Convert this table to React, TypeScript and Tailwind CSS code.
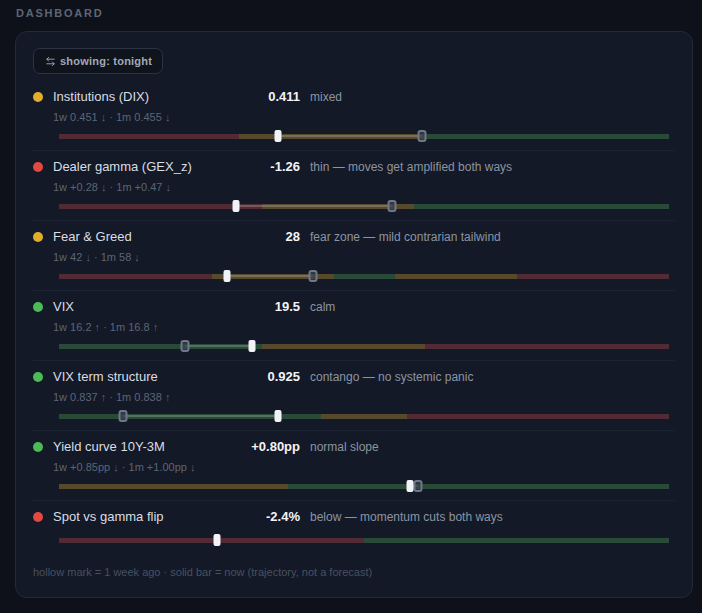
import React from 'react';
import { ArrowLeftRight } from 'lucide-react';

// --- DATA ---
type Tone = 'red' | 'amber' | 'green';

type Indicator = {
  name: string;
  tone: Tone;
  value: string;
  note: string;
  history?: string;
  // bar segments as [tone, end %]
  zones: [Tone, number][];
  now: number;
  weekAgo?: number;
};

const indicators: Indicator[] = [
  {
    name: 'Institutions (DIX)',
    tone: 'amber',
    value: '0.411',
    note: 'mixed',
    history: '1w 0.451 ↓ · 1m 0.455 ↓',
    zones: [['red', 29.5], ['amber', 60], ['green', 100]],
    now: 35.9,
    weekAgo: 59.5,
  },
  {
    name: 'Dealer gamma (GEX_z)',
    tone: 'red',
    value: '-1.26',
    note: 'thin — moves get amplified both ways',
    history: '1w +0.28 ↓ · 1m +0.47 ↓',
    zones: [['red', 33.3], ['amber', 58.2], ['green', 100]],
    now: 29,
    weekAgo: 54.6,
  },
  {
    name: 'Fear & Greed',
    tone: 'amber',
    value: '28',
    note: 'fear zone — mild contrarian tailwind',
    history: '1w 42 ↓ · 1m 58 ↓',
    zones: [['red', 25], ['amber', 45], ['green', 55], ['amber', 75], ['red', 100]],
    now: 27.6,
    weekAgo: 41.6,
  },
  {
    name: 'VIX',
    tone: 'green',
    value: '19.5',
    note: 'calm',
    history: '1w 16.2 ↑ · 1m 16.8 ↑',
    zones: [['green', 33.3], ['amber', 60], ['red', 100]],
    now: 31.6,
    weekAgo: 20.7,
  },
  {
    name: 'VIX term structure',
    tone: 'green',
    value: '0.925',
    note: 'contango — no systemic panic',
    history: '1w 0.837 ↑ · 1m 0.838 ↑',
    zones: [['green', 42.9], ['amber', 57], ['red', 100]],
    now: 35.9,
    weekAgo: 10.5,
  },
  {
    name: 'Yield curve 10Y-3M',
    tone: 'green',
    value: '+0.80pp',
    note: 'normal slope',
    history: '1w +0.85pp ↓ · 1m +1.00pp ↓',
    zones: [['amber', 37.5], ['green', 100]],
    now: 57.5,
    weekAgo: 58.9,
  },
  {
    name: 'Spot vs gamma flip',
    tone: 'red',
    value: '-2.4%',
    note: 'below — momentum cuts both ways',
    zones: [['red', 50], ['green', 100]],
    now: 25.9,
  },
];

const dotColor: Record<Tone, string> = {
  red: 'bg-[#e2493f]',
  amber: 'bg-[#e3ad2c]',
  green: 'bg-[#4cbb55]',
};

const zoneColor: Record<Tone, string> = {
  red: 'bg-[#522a33]',
  amber: 'bg-[#574a2c]',
  green: 'bg-[#284a36]',
};

// --- BAR ---
function RangeBar({ zones, now, weekAgo }: Pick<Indicator, 'zones' | 'now' | 'weekAgo'>) {
  let start = 0;
  const lo = weekAgo === undefined ? now : Math.min(now, weekAgo);
  const hi = weekAgo === undefined ? now : Math.max(now, weekAgo);

  return (
    <div className="relative ml-[26px] mr-[6px] h-[12px] flex items-center">
      <div className="flex w-full h-[5px]">
        {zones.map(([tone, end], i) => {
          const w = end - start;
          start = end;
          return <div key={i} className={`h-full ${zoneColor[tone]}`} style={{ width: `${w}%` }} />;
        })}
      </div>

      {/* trajectory line */}
      {weekAgo !== undefined && (
        <div
          className="absolute top-1/2 -translate-y-1/2 h-[2px] bg-[#c4c6cc]/30"
          style={{ left: `${lo}%`, width: `${hi - lo}%` }}
        />
      )}

      {/* week-ago mark */}
      {weekAgo !== undefined && (
        <div
          className="absolute top-0 -translate-x-1/2 w-[9px] h-[12px] rounded-[3px] border-2 border-[#6f7888] bg-[#3a4252]/70"
          style={{ left: `${weekAgo}%` }}
        />
      )}

      {/* now */}
      <div
        className="absolute top-0 -translate-x-1/2 w-[7px] h-[12px] rounded-[2px] bg-[#f1f3f7]"
        style={{ left: `${now}%` }}
      />
    </div>
  );
}

// --- MAIN ---
export default function App() {
  return (
    <div
      className="h-screen overflow-hidden bg-[#0e1119] pl-[15px] pr-[9px] pt-[6px]"
      style={{ fontFamily: '"Liberation Sans", Arial, sans-serif' }}
    >
      <div className="pl-[1px] text-[11px] leading-[14px] font-bold tracking-[0.16em] text-[#5e6675] mb-[11px]">
        DASHBOARD
      </div>

      <section className="rounded-[12px] border border-[#222a39] bg-[#131926] px-[17px] pt-[16px] pb-[17px]">
        <button className="flex items-center gap-[4px] h-[26px] pl-[11px] pr-[10px] rounded-[7px] border border-[#2b3343] bg-[#0f131c] text-[11px] font-bold tracking-[0.02em] text-[#a2a9b6]">
          <ArrowLeftRight className="w-[11px] h-[11px]" strokeWidth={2} />
          showing: tonight
        </button>

        <div className="mt-[7px]">
          {indicators.map((it, i) => (
            <div
              key={it.name}
              className={`pt-[6px] pb-[8px] ${i < indicators.length - 1 ? 'border-b border-[#1c2332]' : ''}`}
            >
              <div className="flex items-center h-[20px]">
                <span className={`w-[10px] h-[10px] rounded-full ${dotColor[it.tone]}`} />
                <span className="ml-[10px] w-[187px] text-[13px] leading-[20px] text-[#d9dde4]">{it.name}</span>
                <span className="w-[60px] text-right text-[13px] leading-[20px] font-bold text-[#f3f4f6]">{it.value}</span>
                <span className="ml-[10px] text-[12px] leading-[20px] text-[#8c94a3]">{it.note}</span>
              </div>
              {it.history && (
                <div className="mt-[2px] ml-[20px] text-[11px] leading-[16px] text-[#5c6576]">{it.history}</div>
              )}
              <div className={it.history ? 'mt-[5px]' : 'mt-[7px]'}>
                <RangeBar zones={it.zones} now={it.now} weekAgo={it.weekAgo} />
              </div>
            </div>
          ))}
        </div>

        <p className="mt-[10px] text-[11px] leading-[16px] text-[#485061]">
          hollow mark = 1 week ago · solid bar = now (trajectory, not a forecast)
        </p>
      </section>
    </div>
  );
}
